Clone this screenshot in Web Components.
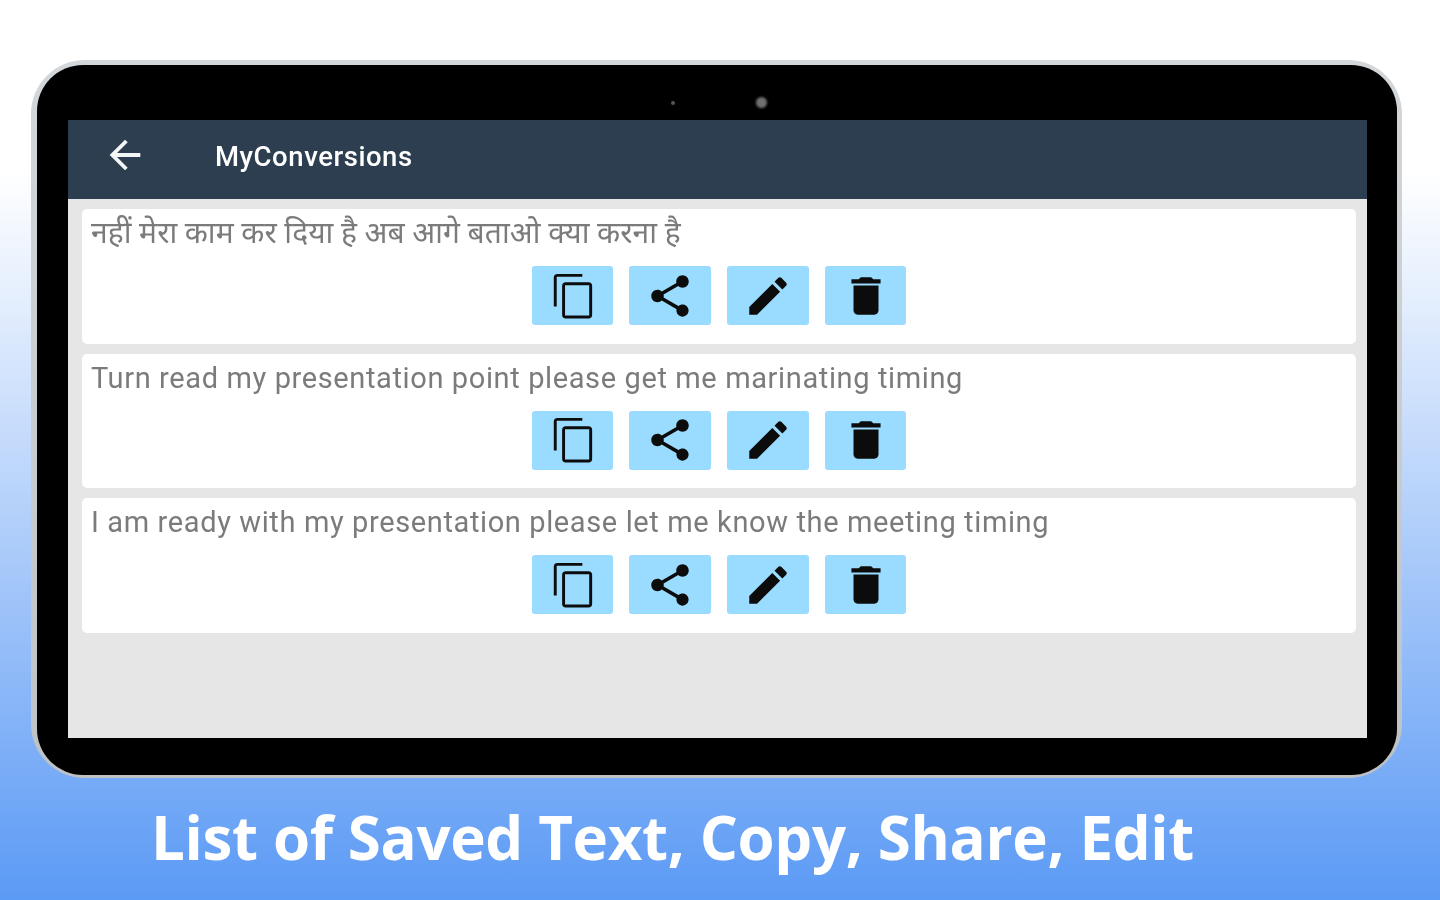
<!DOCTYPE html>
<html lang="en"><head><meta charset="utf-8"><title>MyConversions</title>
<style>
html,body{margin:0;padding:0}
body{width:1440px;height:900px;overflow:hidden;background:linear-gradient(180deg,#fff 0,#fff 170px,#e4eefd 300px,#5b9af5 900px);font-family:Roboto,"Noto Sans",sans-serif}
</style></head><body>
<promo-page>
<tablet-frame>
<app-bar>MyConversions</app-bar>
<conversion-list>
<conversion-card hindi>नहीं मेरा काम कर दिया है अब आगे बताओ क्या करना है</conversion-card>
<conversion-card>Turn read my presentation point please get me marinating timing</conversion-card>
<conversion-card>I am ready with my presentation please let me know the meeting timing</conversion-card>
</conversion-list>
</tablet-frame>
<promo-caption>List of Saved Text, Copy, Share, Edit</promo-caption>
</promo-page>
<script>
const def=(name,css,html)=>customElements.define(name,class extends HTMLElement{constructor(){super();this.attachShadow({mode:'open'}).innerHTML=`<style>${css}</style>${html}`}});
const ICONS={
copy:'M16 1.4H4c-1 0-1.7.7-1.7 1.7V17h1.4V2.8H16V1.4zm3 4H8c-1 0-1.7.7-1.7 1.7v14c0 1 .7 1.7 1.7 1.7h11c1 0 1.7-.7 1.7-1.7V7c0-1-.7-1.6-1.7-1.6zm.3 16H7.7V6.8h11.6v14.6z',
share:'M18 16.08c-.76 0-1.44.3-1.96.77L8.91 12.7c.05-.23.09-.46.09-.7s-.04-.47-.09-.7l7.05-4.11c.54.5 1.25.81 2.04.81 1.66 0 3-1.34 3-3s-1.34-3-3-3-3 1.34-3 3c0 .24.04.47.09.7L8.04 9.81C7.5 9.31 6.79 9 6 9c-1.66 0-3 1.34-3 3s1.34 3 3 3c.79 0 1.5-.31 2.04-.81l7.12 4.16c-.05.21-.08.43-.08.65 0 1.61 1.31 2.92 2.92 2.92 1.61 0 2.92-1.31 2.92-2.92s-1.31-2.92-2.92-2.92z',
edit:'M3 17.25V21h3.75L17.81 9.94l-3.75-3.75L3 17.25zM20.71 7.04c.39-.39.39-1.02 0-1.41l-2.34-2.34c-.39-.39-1.02-.39-1.41 0l-1.83 1.83 3.75 3.75 1.83-1.83z',
del:'M6 19c0 1.1.9 2 2 2h8c1.1 0 2-.9 2-2V7H6v12zM19 4h-3.5l-1-1h-5l-1 1H5v2h14V4z'};
def('promo-page',':host{display:flex;flex-direction:column;height:900px;box-sizing:border-box;padding:60px 38px 0 31px}','<slot></slot>');
def('tablet-frame',`:host{display:block;flex:none;height:718px;box-sizing:border-box;border-radius:54px;background:linear-gradient(180deg,#d4d7da,#bfc2c4);padding:5px 5px 3px 6px;position:relative}
.bezel{height:100%;box-sizing:border-box;background:#000;border-radius:46px;padding:55px 30px 37px 31px;position:relative}
.cam,.dot{position:absolute;border-radius:50%}
.cam{width:11px;height:11px;left:719px;top:32px;background:#6f6f6f;filter:blur(1px)}
.dot{width:4px;height:4px;left:634px;top:36px;background:#555;filter:blur(.6px)}
.screen{height:100%;display:flex;flex-direction:column}`,'<div class="bezel"><div class="dot"></div><div class="cam"></div><div class="screen"><slot></slot></div></div>');
def('app-bar',`:host{display:flex;align-items:center;flex:none;height:79px;background:#2c3e50;color:#fff;font:500 27.5px/1 Roboto,sans-serif;letter-spacing:.55px;filter:blur(.6px)}
svg{width:46px;height:46px;margin-left:34px;margin-right:67px;flex:none;margin-top:-9px}
span{margin-top:-6px}`,'<svg viewBox="0 0 24 24"><path fill="#f4f5f6" d="M20 11H7.83l5.59-5.59L12 4l-8 8 8 8 1.41-1.41L7.83 13H20v-2z"/></svg><span><slot></slot></span>');
def('conversion-list',':host{display:flex;flex-direction:column;flex:1;gap:10px;background:#e6e6e6;padding:10px 11px 0 14px}','<slot></slot>');
def('conversion-card',`:host{display:block;flex:none;height:134.5px;box-sizing:border-box;background:#fff;border-radius:5px;padding:6px 9px 0;color:#7b7b7b;font:400 29px/36px Roboto,"Noto Sans",sans-serif;letter-spacing:.62px;filter:blur(.6px)}
:host([hindi]){font-size:30px;letter-spacing:.1px}
.t{height:51px;white-space:nowrap}
.r{display:flex;justify-content:center;gap:16.2px;letter-spacing:0}`,`<div class="t"><slot></slot></div><div class="r"><action-button icon="copy"></action-button><action-button icon="share"></action-button><action-button icon="edit"></action-button><action-button icon="del"></action-button></div>`);
customElements.define('action-button',class extends HTMLElement{constructor(){super();const k=this.getAttribute('icon');this.attachShadow({mode:'open'}).innerHTML=`<style>:host{display:flex;align-items:center;justify-content:center;width:81.5px;height:59px;background:#99dcff;border-radius:3px}svg{width:50px;height:50px;display:block}:host([icon=copy]) svg{margin-left:3px}</style><svg viewBox="0 0 24 24"><path fill="#0c0c0c" d="${ICONS[k]}"/></svg>`}});
def('promo-caption',`:host{display:block;color:#fff;font:700 60px/1 "Open Sans",sans-serif;letter-spacing:-.35px;white-space:nowrap;margin:29px 0 0 120px;filter:blur(.5px)}`,'<slot></slot>');
</script>
</body></html>
